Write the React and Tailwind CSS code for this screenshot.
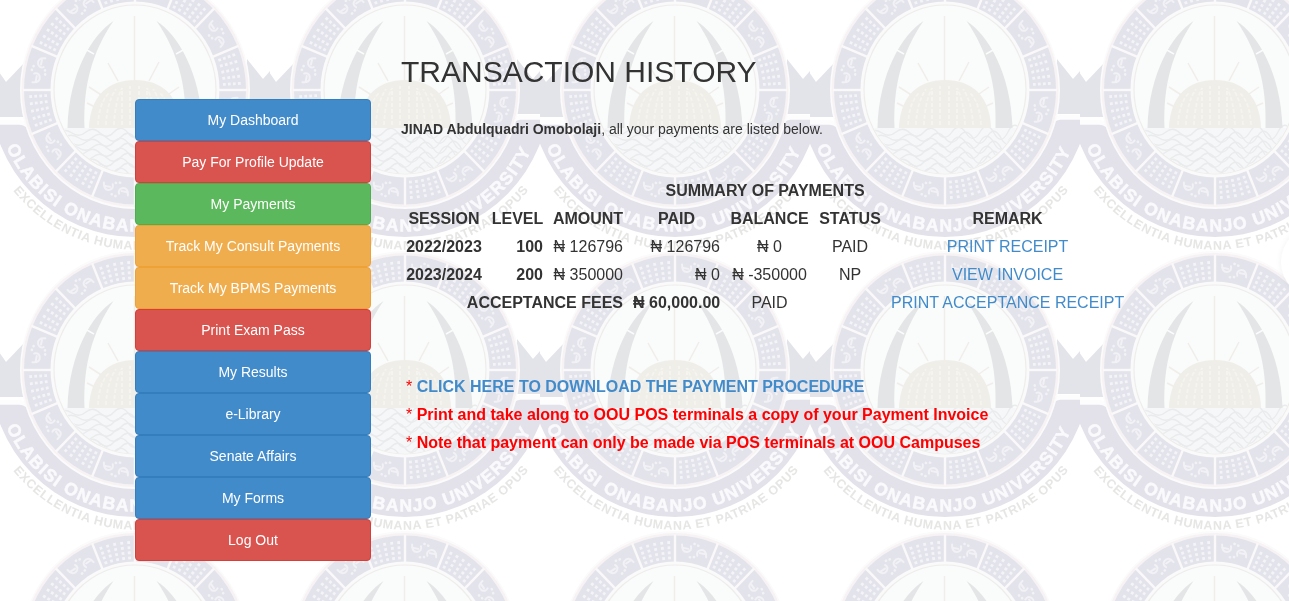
const CX = 135;
const CY = 120;

const at = (deg, r, ratio = 1.03) => {
  const a = (deg * Math.PI) / 180;
  return [CX + Math.cos(a) * r, CY + Math.sin(a) * r * ratio];
};

function Checks({ start }) {
  const dots = [];
  [89.5, 94.5, 99.5, 104.5].forEach((r) => {
    [3.5, 7.3, 11.25, 15.2, 19].forEach((d) => {
      const [x, y] = at(start + d, r);
      dots.push(
        <rect key={`${r}-${d}`} x={x - 1.4} y={y - 1.4} width="2.8" height="2.8" fill="#f3f3f8" transform={`rotate(${start + d} ${x} ${y})`} />
      );
    });
  });
  return <g>{dots}</g>;
}

function Swirls({ start }) {
  const [x, y] = at(start + 11.25, 98);
  return (
    <g transform={`translate(${x} ${y}) rotate(${start + 101})`} fill="none" stroke="#f1f1f6" strokeWidth="2" strokeLinecap="round">
      <path d="M-13 -4q1 8 7 6q4 -2 2 -6M-11 -1h5" />
      <path d="M13 4q-1 -8 -7 -6q-4 2 -2 6M11 1h-5" />
      <path d="M-1 -7h.2M3 -6h.2M-3 7h.2M1 6h.2" strokeWidth="2.6" />
    </g>
  );
}

function Backdrop() {
  const sectors = Array.from({ length: 16 }, (_, i) => i * 22.5);
  const tusk = "M113.5 51C93 64 69 102 67.500 158H84.500C83 116 92 82 113.500 51Z";
  return (
    <svg className="fixed inset-0 -z-10 h-full w-full" aria-hidden="true">
      <defs>
        <clipPath id="lower">
          <path d="M0 154H31L55 120H215L239 149H270V280H0Z" />
        </clipPath>
        <clipPath id="disc">
          <ellipse cx={CX} cy={CY - 0.5} rx="80" ry="84" />
        </clipPath>
        <filter id="soft" filterUnits="userSpaceOnUse" x="-10" y="-10" width="290" height="300">
          <feGaussianBlur stdDeviation="0.6" />
        </filter>
        <path id="nameArc" d="M6.500 177A140 142 0 0 0 265 171" />
        <path id="mottoArc" d="M13 220.500A158 160 0 0 0 261 217" />
        <pattern id="seal" width="270" height="280" patternUnits="userSpaceOnUse" patternTransform="translate(0 -30)">
          <rect width="270" height="280" fill="#fff" />
          <g filter="url(#soft)">
            <path d="M-8 92L6 112L25 92V147H-8Z" fill="#e3e3ea" />
            <path d="M278 92L263 109L247 89V144H278Z" fill="#e3e3ea" />
            <ellipse cx={CX} cy={CY} rx="145" ry="147" fill="#e3e2ea" clipPath="url(#lower)" />
            <path d="M-8 152.500H20Q28 153 33 162" fill="none" stroke="#fdfdfd" strokeWidth="4.500" />
            <path d="M278 147.500H250Q242 148 238 158" fill="none" stroke="#fdfdfd" strokeWidth="4.500" />
            <ellipse cx={CX} cy={CY} rx="115" ry="119" fill="#fcfbfb" />
            <ellipse cx={CX} cy={CY} rx="113.500" ry="117" fill="#f7f3f4" />
            <ellipse cx={CX} cy={CY} rx="111" ry="114.500" fill="#e3e3eb" />
            {sectors.map((s, i) => (i % 2 ? <Checks key={s} start={s} /> : <Swirls key={s} start={s} />))}
            {sectors.map((s) => {
              const [x1, y1] = at(s, 84);
              const [x2, y2] = at(s, 112);
              return <line key={s} x1={x1} y1={y1} x2={x2} y2={y2} stroke="#faf8f8" strokeWidth="2.400" />;
            })}
            <ellipse cx={CX} cy={CY - 0.5} rx="84.500" ry="88" fill="#fbfafa" />
            <ellipse cx={CX} cy={CY - 0.5} rx="81" ry="84.500" fill="#fafbfb" stroke="#eeedec" strokeWidth="1.200" />
            <g clipPath="url(#disc)">
              <rect x="50" y="158" width="170" height="50" fill="#f6f7f8" />
              {[162, 167, 172, 177, 182, 187, 192, 197, 202].map((y, i) => (
                <path
                  key={y}
                  d={`M${44 + (i % 2) * 7} ${y}q7 4 14 0t14 1t14 -1t14 1t14 -1t14 1t14 -1t14 1t14 -1t14 1t14 -1t14 1`}
                  fill="none"
                  stroke="#e9ebec"
                  strokeWidth="1.300"
                />
              ))}
            </g>
            <g stroke="#f1eeea" strokeWidth="1.500">
              <path d="M134.500 46V110M108 93L118 111M159 92L149 111M89 117L103 126M179 117L166 126M87 133L95 137M183 133L174 137" />
            </g>
            <path d="M89 158C90 126 108 110 135 110S180 126 181 158Z" fill="#f0eee9" />
            <g fill="none" stroke="#f6f4ef" strokeWidth="1.800">
              <path d="M98 155Q99 132 110 122M106 155Q107 132 116 119M114 155Q115 132 122 118M122 155V118M130 155V116M139 155V116M147 155V118M155 155Q154 132 147 118M163 155Q162 132 153 119M171 155Q170 132 159 122" strokeDasharray="4 2" />
            </g>
            <path d={tusk} fill="#e4e5e6" />
            <path d={tusk} fill="#e4e5e6" transform="translate(270 0) scale(-1 1)" />
            <path d="M85 79L94 84M185 79L176 84" stroke="#fafbfb" strokeWidth="1.500" />
            <text fontFamily="Liberation Sans" fontWeight="700" fontSize="17.500" fill="#fafafc" stroke="#fafafc" strokeWidth="0.500">
              <textPath href="#nameArc" textLength="320" lengthAdjust="spacing">OLABISI ONABANJO UNIVERSITY</textPath>
            </text>
            <text fontFamily="Liberation Sans" fontWeight="700" fontSize="12.500" fill="#e6e6e5">
              <textPath href="#mottoArc" textLength="282" lengthAdjust="spacing">EXCELLENTIA HUMANA ET PATRIAE OPUS</textPath>
            </text>
          </g>
        </pattern>
      </defs>
      <rect width="100%" height="100%" fill="url(#seal)" />
    </svg>
  );
}

const tones = {
  blue: "bg-[#428bca] border-[#357ebd]",
  red: "bg-[#d9534f] border-[#d43f3a]",
  green: "bg-[#5cb85c] border-[#4cae4c]",
  orange: "bg-[#f0ad4e] border-[#eea236]",
};

const menu = [
  ["My Dashboard", "blue"],
  ["Pay For Profile Update", "red"],
  ["My Payments", "green"],
  ["Track My Consult Payments", "orange"],
  ["Track My BPMS Payments", "orange"],
  ["Print Exam Pass", "red"],
  ["My Results", "blue"],
  ["e-Library", "blue"],
  ["Senate Affairs", "blue"],
  ["My Forms", "blue"],
  ["Log Out", "red"],
];

const rows = [
  ["2022/2023", "100", "₦ 126796", "₦ 126796", "₦ 0", "PAID", "PRINT RECEIPT"],
  ["2023/2024", "200", "₦ 350000", "₦ 0", "₦ -350000", "NP", "VIEW INVOICE"],
];

export default function App() {
  return (
    <div className="relative isolate flex h-[601px] overflow-hidden pl-[135px] font-['Liberation_Sans',Arial,sans-serif] text-sm text-[#333]">
      <Backdrop />
      <nav className="mt-[99px] flex w-[236px] flex-col">
        {menu.map(([label, tone]) => (
          <a key={label} href="#" className={`flex h-[42px] items-center justify-center rounded border text-white ${tones[tone]}`}>
            {label}
          </a>
        ))}
      </nav>
      <main className="ml-[30px] w-[728px] pt-[55px]">
        <h1 className="text-[30px] leading-[33px]">TRANSACTION HISTORY</h1>
        <p className="mt-[31px] leading-5">
          <b>JINAD Abdulquadri Omobolaji</b>, all your payments are listed below.
        </p>
        <table className="mt-[38px] w-[728px] table-fixed border-collapse text-base leading-7 [&_td]:px-[5px] [&_td]:py-0 [&_th]:p-0 whitespace-nowrap">
          <colgroup>
            <col className="w-[86px]" />
            <col className="w-[61px]" />
            <col className="w-[80px]" />
            <col className="w-[97px]" />
            <col className="w-[89px]" />
            <col className="w-[72px]" />
            <col className="w-[243px]" />
          </colgroup>
          <thead>
            <tr>
              <th colSpan={7}>SUMMARY OF PAYMENTS</th>
            </tr>
            <tr>
              {["SESSION", "LEVEL", "AMOUNT", "PAID", "BALANCE", "STATUS", "REMARK"].map((h) => (
                <th key={h}>{h}</th>
              ))}
            </tr>
          </thead>
          <tbody>
            {rows.map(([session, level, amount, paid, balance, status, remark]) => (
              <tr key={session}>
                <td className="text-center font-bold">{session}</td>
                <td className="text-right font-bold">{level}</td>
                <td className="text-right">{amount}</td>
                <td className="text-right">{paid}</td>
                <td className="text-center">{balance}</td>
                <td className="text-center">{status}</td>
                <td className="text-center">
                  <a href="#" className="text-[#428bca]">{remark}</a>
                </td>
              </tr>
            ))}
            <tr>
              <td colSpan={3} className="text-right font-bold">ACCEPTANCE FEES</td>
              <td className="text-right font-bold">₦ 60,000.00</td>
              <td className="text-center">PAID</td>
              <td />
              <td className="text-center">
                <a href="#" className="text-[#428bca]">PRINT ACCEPTANCE RECEIPT</a>
              </td>
            </tr>
          </tbody>
        </table>
        <ul className="mt-14 pl-[5px] text-base leading-7 text-[#f00]">
          <li>* <a href="#" className="font-bold text-[#428bca]">CLICK HERE TO DOWNLOAD THE PAYMENT PROCEDURE</a></li>
          <li>* <b>Print and take along to OOU POS terminals a copy of your Payment Invoice</b></li>
          <li>* <b>Note that payment can only be made via POS terminals at OOU Campuses</b></li>
        </ul>
      </main>
      <div className="absolute top-[226px] -right-16 size-[72px] rounded-full bg-white shadow-[0_0_6px_rgba(0,0,0,0.06)]" />
    </div>
  );
}
